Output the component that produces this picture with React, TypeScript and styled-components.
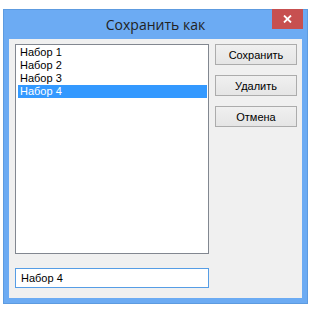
import styled, { createGlobalStyle } from 'styled-components';

const GlobalStyle = createGlobalStyle`
  html, body {
    margin: 0;
    padding: 0;
    background: #ffffff;
  }
  body {
    font-family: "Liberation Sans", Arial, sans-serif;
  }
`;

const Page = styled.div`
  padding: 9px 0 0 3px;
`;

const Window = styled.div`
  width: 305px;
  height: 295px;
  background: #6cabf3;
  box-sizing: border-box;
  display: flex;
  flex-direction: column;
  box-shadow: inset 0 0 0 1px #5d9be0;
`;

const TitleBar = styled.div`
  position: relative;
  height: 30px;
  display: flex;
  align-items: center;
  justify-content: center;
`;

const Title = styled.span`
  font-family: "Open Sans", "Noto Sans", sans-serif;
  font-size: 14px;
  color: #222;
  margin-top: 1px;
`;

const CloseButton = styled.div`
  position: absolute;
  top: 0;
  right: 5px;
  width: 31px;
  height: 20px;
  background: #c75050;
  display: flex;
  align-items: center;
  justify-content: center;
`;

const Client = styled.div`
  flex: 1;
  margin: 0 6px 6px 6px;
  background: #f0f0f0;
  padding: 5px 6px 0 6px;
  display: grid;
  grid-template-columns: 194px 82px;
  column-gap: 6px;
  align-content: start;
`;

const ListBox = styled.div`
  height: 210px;
  box-sizing: border-box;
  border: 1px solid #828790;
  background: #fff;
  padding: 1px 1px 0 2px;
`;

const Item = styled.div<{ selected?: boolean }>`
  height: 13px;
  line-height: 13px;
  font-size: 11px;
  padding-left: 2px;
  color: ${(p) => (p.selected ? '#fff' : '#000')};
  background: ${(p) => (p.selected ? '#3399ff' : 'transparent')};
`;

const ButtonColumn = styled.div`
  display: flex;
  flex-direction: column;
  gap: 10px;
`;

const Button = styled.div`
  height: 21px;
  box-sizing: border-box;
  border: 1px solid #acacac;
  background: linear-gradient(#f0f0f0, #e5e5e5);
  font-size: 11px;
  color: #000;
  display: flex;
  align-items: center;
  justify-content: center;
`;

const NameField = styled.div`
  margin-top: 14px;
  height: 20px;
  box-sizing: border-box;
  border: 1px solid #569de5;
  background: #fff;
  font-size: 11px;
  padding-left: 5px;
  display: flex;
  align-items: center;
`;

const items = ['Набор 1', 'Набор 2', 'Набор 3', 'Набор 4'];

export default function App() {
  return (
    <Page>
      <GlobalStyle />
      <Window>
        <TitleBar>
          <Title>Сохранить как</Title>
          <CloseButton>
            <svg width="9" height="8" viewBox="0 0 9 8">
              <path d="M1 0.5 L8 7.5 M8 0.5 L1 7.5" stroke="#fff" strokeWidth="1.8" />
            </svg>
          </CloseButton>
        </TitleBar>
        <Client>
          <ListBox>
            {items.map((it, i) => (
              <Item key={it} selected={i === 3}>{it}</Item>
            ))}
          </ListBox>
          <ButtonColumn>
            <Button>Сохранить</Button>
            <Button>Удалить</Button>
            <Button>Отмена</Button>
          </ButtonColumn>
          <NameField>Набор 4</NameField>
        </Client>
      </Window>
    </Page>
  );
}
